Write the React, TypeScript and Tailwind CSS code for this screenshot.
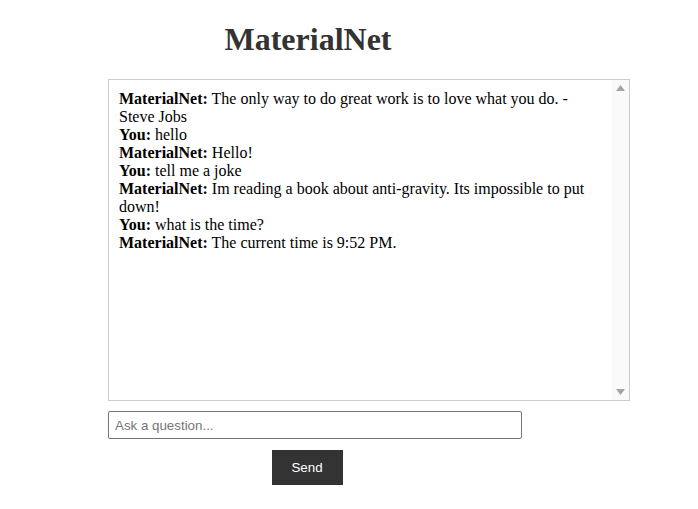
import React from "react";

const messages: { who: string; text: string }[] = [
  { who: "MaterialNet", text: "The only way to do great work is to love what you do. - Steve Jobs" },
  { who: "You", text: "hello" },
  { who: "MaterialNet", text: "Hello!" },
  { who: "You", text: "tell me a joke" },
  { who: "MaterialNet", text: "Im reading a book about anti-gravity. Its impossible to put down!" },
  { who: "You", text: "what is the time?" },
  { who: "MaterialNet", text: "The current time is 9:52 PM." },
];

export default function App() {
  return (
    <div className="min-h-[509px] w-full bg-white" style={{ fontFamily: '"Liberation Serif", serif' }}>
      <div className="pt-[21px]">
        <h1 className="ml-[8px] w-[600px] text-center text-[32px] font-bold leading-[37px] text-[#333333]">
          MaterialNet
        </h1>
        <div className="ml-[108px] mt-[21px] flex h-[322px] w-[522px] border border-[#cccccc]">
          <div className="flex-1 overflow-hidden p-[10px] text-[16px] leading-[18px] text-black">
            {messages.map((m, i) => (
              <p key={i}>
                <strong className="font-bold">{m.who}:</strong> {m.text}
              </p>
            ))}
          </div>
          <div className="flex w-[17px] flex-col items-center justify-between bg-[#fafafa] py-[5px]">
            <svg width="9" height="6" viewBox="0 0 9 6">
              <path d="M4.5 0 L9 6 L0 6 Z" fill="#a3a3a3" />
            </svg>
            <svg width="9" height="6" viewBox="0 0 9 6">
              <path d="M0 0 L9 0 L4.5 6 Z" fill="#a3a3a3" />
            </svg>
          </div>
        </div>
        <div className="ml-[108px] mt-[10px]">
          <input
            type="text"
            placeholder="Ask a question..."
            className="block h-[28px] w-[414px] rounded-[2px] border border-[#767676] px-[6px] text-[13.33px] text-black outline-none placeholder:text-[#757575]"
            style={{ fontFamily: '"Liberation Sans", Arial, sans-serif' }}
          />
        </div>
        <div className="ml-[7px] mt-[11px] flex w-[600px] justify-center">
          <button
            className="h-[35px] w-[71px] bg-[#333333] text-[13.33px] text-white"
            style={{ fontFamily: '"Liberation Sans", Arial, sans-serif' }}
          >
            Send
          </button>
        </div>
      </div>
    </div>
  );
}
